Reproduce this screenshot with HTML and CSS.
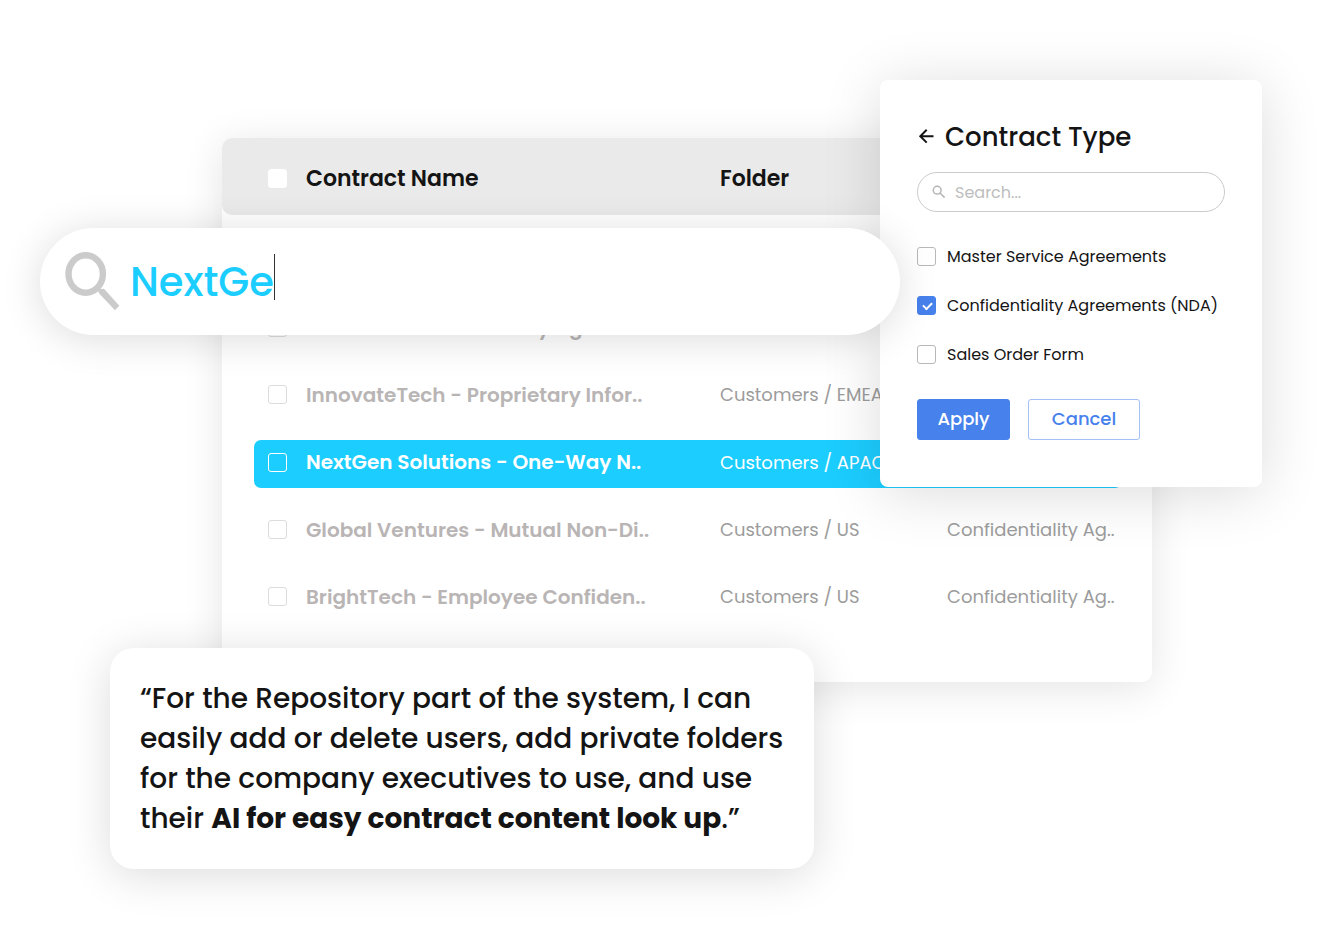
FILE: index.html
```html
<!DOCTYPE html>
<html lang="en">
<head>
  <meta charset="UTF-8">
  <meta name="viewport" content="width=device-width, initial-scale=1.0">
  <title>Contract Repository</title>
  <link rel="stylesheet" href="styles.css">
</head>
<body>

<main class="stage">
  <section class="tableCard">
    <table>
      <colgroup>
        <col class="colCheck">
        <col class="colName">
        <col class="colFolder">
        <col class="colType">
      </colgroup>
      <thead>
        <tr>
          <th><input type="checkbox" aria-label="Select all"></th>
          <th>Contract Name</th>
          <th>Folder</th>
          <th></th>
        </tr>
      </thead>
      <tbody>
        <tr>
          <td><input type="checkbox" aria-label="Select contract"></td>
          <td class="name">Vertexa Industries - Key Agre..</td>
          <td></td>
          <td></td>
        </tr>
        <tr>
          <td><input type="checkbox" aria-label="Select InnovateTech"></td>
          <td class="name">InnovateTech - Proprietary Infor..</td>
          <td>Customers / EMEA</td>
          <td></td>
        </tr>
        <tr class="selected">
          <td><input type="checkbox" aria-label="Select NextGen Solutions"></td>
          <td class="name">NextGen Solutions - One-Way N..</td>
          <td>Customers / APAC</td>
          <td></td>
        </tr>
        <tr>
          <td><input type="checkbox" aria-label="Select Global Ventures"></td>
          <td class="name">Global Ventures - Mutual Non-Di..</td>
          <td>Customers / US</td>
          <td>Confidentiality Ag..</td>
        </tr>
        <tr>
          <td><input type="checkbox" aria-label="Select BrightTech"></td>
          <td class="name">BrightTech - Employee Confiden..</td>
          <td>Customers / US</td>
          <td>Confidentiality Ag..</td>
        </tr>
      </tbody>
    </table>
  </section>

  <form class="filterPanel">
    <h2>
      <svg width="20" height="20" viewBox="0 0 20 20" fill="none" stroke="#141414" stroke-width="2">
        <path d="M16.5 9.2H3.5M9.7 2.8L3.3 9.2L9.7 15.6"/>
      </svg>
      Contract Type
    </h2>
    <div class="filterSearch">
      <svg width="14" height="14" viewBox="0 0 14 14" fill="none" stroke="#b5b5b5" stroke-width="1.5">
        <circle cx="5.2" cy="5.2" r="3.9"/>
        <path d="M8 8L12.6 12.6"/>
      </svg>
      <input type="text" placeholder="Search..." aria-label="Search contract types">
    </div>
    <div class="options">
      <label><input type="checkbox"> Master Service Agreements</label>
      <label><input type="checkbox" checked> Confidentiality Agreements (NDA)</label>
      <label><input type="checkbox"> Sales Order Form</label>
    </div>
    <div class="actions">
      <button type="button" class="apply">Apply</button>
      <button type="button" class="cancel">Cancel</button>
    </div>
  </form>

  <div class="searchBar">
    <svg width="56" height="60" viewBox="0 0 56 60">
      <ellipse cx="21.7" cy="22" rx="17.2" ry="18.7" fill="none" stroke="#cbcbcb" stroke-width="6.4"/>
      <path d="M33.5 37.2L40 36.7L55.3 53.7L51 58.3L35.2 41.6Z" fill="#cbcbcb"/>
    </svg>
    <input type="text" value="NextGe" aria-label="Search contracts">
    <span class="caret"></span>
  </div>

  <blockquote class="quote">
    “For the Repository part of the system, I can<br>
    easily add or delete users, add private folders<br>
    for the company executives to use, and use<br>
    their <strong>AI for easy contract content look up</strong>.”
  </blockquote>
</main>

</body>
</html>
```

FILE: styles.css
```css
* {
  box-sizing: border-box;
}

body {
  margin: 0;
  background: #fff;
  color: #141414;
  font-family: Poppins, Inter, sans-serif;
}

.stage {
  position: relative;
  min-height: 100vh;
  padding: 138px 190px 0 222px;
}

/* contracts table */
.tableCard {
  padding-bottom: 52px;
  border-radius: 10px;
  background: #fff;
  box-shadow: 0 6px 40px rgba(0, 0, 0, 0.11);
}

table {
  width: 100%;
  table-layout: fixed;
  border-collapse: separate;
  border-spacing: 0;
}

.colCheck {
  width: 84px;
}

.colName {
  width: 414px;
}

.colFolder {
  width: 227px;
}

th,
td {
  height: 67px;
  padding: 0;
  text-align: left;
  white-space: nowrap;
}

th {
  height: 77px;
  padding-top: 4px;
  background: #eaeaea;
  font-size: 22px;
  font-weight: 600;
}

th:first-child {
  border-radius: 10px 0 0 10px;
}

th:last-child {
  border-radius: 0 10px 10px 0;
}

th:first-child,
td:first-child {
  padding-left: 46px;
}

tbody::before {
  content: "";
  display: block;
  height: 79px;
}

.selected td {
  height: 68px;
}

td {
  color: #9c9c9c;
  font-size: 18px;
}

td.name {
  color: #b9b5b5;
  font-size: 20px;
  font-weight: 600;
}

.selected {
  position: relative;
  z-index: 0;
}

.selected td,
.selected td.name {
  color: #fff;
}

.selected td:first-child::before {
  content: "";
  position: absolute;
  inset: 12px 30px 8px 32px;
  z-index: -1;
  border-radius: 7px;
  background: #1ccdff;
}

/* checkboxes */
input[type="checkbox"] {
  appearance: none;
  display: block;
  flex: none;
  position: relative;
  width: 19px;
  height: 19px;
  margin: 0;
  border: 1px solid #b8b8b8;
  border-radius: 3px;
  background: #fff;
}

.tableCard td input[type="checkbox"] {
  border-color: #dcdcdc;
}

.tableCard th input[type="checkbox"] {
  border-color: #fff;
}

.tableCard .selected input[type="checkbox"] {
  border-color: #fff;
  background: transparent;
}

input[type="checkbox"]:checked {
  border-color: #4781eb;
  background: #4781eb;
}

input[type="checkbox"]:checked::after {
  content: "";
  position: absolute;
  top: 5px;
  left: 5px;
  width: 7px;
  height: 4px;
  border: solid #fff;
  border-width: 0 0 2px 2px;
  transform: rotate(-45deg);
}

/* contract type filter */
.filterPanel {
  position: absolute;
  top: 80px;
  right: 80px;
  width: 382px;
  padding: 37px 37px 47px;
  border-radius: 8px;
  background: #fff;
  box-shadow: 0 6px 60px rgba(0, 0, 0, 0.14);
}

.filterPanel h2 {
  display: flex;
  align-items: center;
  gap: 8px;
  margin: 0 0 15px;
  font-size: 26px;
  font-weight: 500;
  line-height: 40px;
}

.filterSearch {
  display: flex;
  align-items: center;
  gap: 7px;
  height: 40px;
  padding: 0 14px;
  border: 1px solid #cbcbcb;
  border-radius: 20px;
}

.filterSearch input {
  flex: 1;
  min-width: 0;
  border: 0;
  outline: 0;
  background: none;
  font: 16px Poppins, Inter, sans-serif;
}

.filterSearch input::placeholder {
  color: #bdbdbd;
}

.options {
  display: flex;
  flex-direction: column;
  gap: 30px;
  margin: 35px 0;
}

.options label {
  display: flex;
  align-items: center;
  gap: 11px;
  font-size: 16px;
  line-height: 19px;
  white-space: nowrap;
}

.actions {
  display: flex;
  gap: 18px;
}

.actions button {
  width: 93px;
  height: 41px;
  padding: 0 0 2px;
  border: 1px solid #4781eb;
  border-radius: 3px;
  background: #4781eb;
  color: #fff;
  font: 500 18px Poppins, Inter, sans-serif;
}

.actions .cancel {
  width: 112px;
  border-color: #a3bff5;
  background: #fff;
  color: #4781eb;
}

/* big search bar */
.searchBar {
  position: absolute;
  top: 228px;
  left: 40px;
  right: 442px;
  display: flex;
  align-items: center;
  height: 107px;
  padding: 0 24px;
  border-radius: 54px;
  background: #fff;
  box-shadow: 0 4px 40px rgba(0, 0, 0, 0.14);
}

.searchBar input {
  width: 144px;
  margin-left: 10px;
  padding: 0;
  border: 0;
  outline: 0;
  background: none;
  color: #1ccdff;
  font: 500 40px Poppins, Inter, sans-serif;
}

.caret {
  width: 1px;
  height: 46px;
  margin-bottom: 10px;
  background: #333;
}

/* testimonial */
.quote {
  position: absolute;
  top: 648px;
  left: 110px;
  width: 704px;
  margin: 0;
  padding: 31px 30px 30px;
  border-radius: 24px;
  background: #fff;
  box-shadow: 0 6px 45px rgba(0, 0, 0, 0.14);
  font-size: 28px;
  font-weight: 500;
  line-height: 40px;
}

.quote strong {
  font-weight: 700;
}
```
